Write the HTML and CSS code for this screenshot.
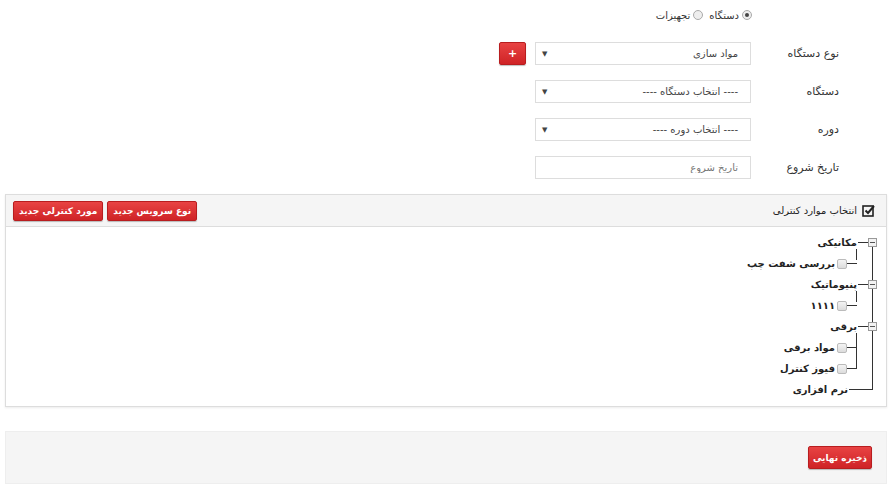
FILE: index.html
```html
<!DOCTYPE html>
<html lang="fa" dir="rtl">
<head>
  <meta charset="UTF-8">
  <meta name="viewport" content="width=device-width, initial-scale=1.0">
  <title>موارد کنترلی</title>
  <link rel="stylesheet" href="styles.css">
</head>
<body>
  <div class="page">
    <form class="filter">
      <div class="radios">
        <label class="radio"><span class="dot checked"></span>دستگاه</label>
        <label class="radio"><span class="dot"></span>تجهیزات</label>
      </div>

      <div class="row">
        <label class="lbl">نوع دستگاه</label>
        <div class="select"><span>مواد سازی</span><span class="arrow">▼</span></div>
        <button type="button" class="btn add">+</button>
      </div>

      <div class="row">
        <label class="lbl">دستگاه</label>
        <div class="select"><span>---- انتخاب دستگاه ----</span><span class="arrow">▼</span></div>
      </div>

      <div class="row">
        <label class="lbl">دوره</label>
        <div class="select"><span>---- انتخاب دوره ----</span><span class="arrow">▼</span></div>
      </div>

      <div class="row">
        <label class="lbl">تاریخ شروع</label>
        <input class="text" type="text" placeholder="تاریخ شروع">
      </div>
    </form>

    <div class="panel">
      <div class="panel-head">
        <div class="title">
          <svg width="13" height="13" viewBox="0 0 13 13">
            <rect x="1" y="2" width="10" height="10" fill="none" stroke="#222" stroke-width="1.6"/>
            <path d="M3.5 6.5 L6 9 L12 2" fill="none" stroke="#222" stroke-width="2"/>
          </svg>
          انتخاب موارد کنترلی
        </div>
        <div class="actions">
          <button type="button" class="btn">نوع سرویس جدید</button>
          <button type="button" class="btn">مورد کنترلی جدید</button>
        </div>
      </div>

      <div class="panel-body">
        <ul class="tree">
          <li class="node">
            <span class="toggle"></span>مکانیکی
            <ul>
              <li><span class="check"></span>بررسی شفت چپ</li>
            </ul>
          </li>
          <li class="node">
            <span class="toggle"></span>پنیوماتیک
            <ul>
              <li><span class="check"></span>۱۱۱۱</li>
            </ul>
          </li>
          <li class="node">
            <span class="toggle"></span>برقی
            <ul>
              <li><span class="check"></span>مواد برقی</li>
              <li><span class="check"></span>فیوز کنترل</li>
            </ul>
          </li>
          <li class="leaf">نرم افزاری</li>
        </ul>
      </div>
    </div>

    <div class="footer">
      <button type="button" class="btn save">ذخیره نهایی</button>
    </div>
  </div>
</body>
</html>
```

FILE: styles.css
```css
body {
  margin: 0;
  font-family: "DejaVu Sans", Tahoma, sans-serif;
  font-size: 11px;
  color: #333;
  background: #fff;
}

.page {
  padding: 0 5px;
}

/* top form */
.filter {
  display: flex;
  flex-direction: column;
  gap: 15px;
  padding-top: 6px;
}

.radios {
  display: flex;
  gap: 6px;
  height: 18px;
  align-items: center;
  padding-right: 135px;
  margin-bottom: 3px;
}

.radio {
  display: flex;
  align-items: center;
  gap: 3px;
  font-size: 10px;
}

.dot {
  width: 8px;
  height: 8px;
  border: 1px solid #aaa;
  border-radius: 50%;
  background: #eee;
  position: relative;
}

.dot.checked::after {
  content: "";
  position: absolute;
  top: 2px;
  right: 2px;
  width: 4px;
  height: 4px;
  border-radius: 50%;
  background: #444;
}

.row {
  display: flex;
  align-items: center;
  height: 23px;
  padding-right: 48px;
}

.lbl {
  width: 88px;
  font-size: 11px;
  color: #333;
}

.select {
  width: 208px;
  height: 21px;
  border: 1px solid #ddd;
  display: flex;
  align-items: center;
  justify-content: space-between;
  padding: 0 0 0 6px;
  box-sizing: content-box;
  color: #444;
  font-size: 10px;
}

.select span:first-child {
  padding-right: 12px;
}

.arrow {
  font-size: 7px;
  color: #444;
}

.text {
  width: 200px;
  height: 21px;
  border: 1px solid #ddd;
  padding: 0 12px 0 2px;
  font-family: inherit;
  font-size: 10px;
  box-sizing: content-box;
}

.text::placeholder {
  color: #777;
}

.btn {
  font-family: inherit;
  background: linear-gradient(#e84343, #cf2326);
  border: 1px solid #b81d1f;
  border-radius: 2px;
  color: #fff;
  font-weight: bold;
  font-size: 9px;
  height: 21px;
  padding: 0 8px;
  box-shadow: 0 1px 1px rgba(0, 0, 0, 0.25);
}

.add {
  width: 27px;
  height: 23px;
  margin-right: 9px;
  padding: 0;
  font-size: 11px;
}

/* panel */
.panel {
  margin-top: 15px;
  border: 1px solid #ddd;
  box-shadow: 0 1px 2px rgba(0, 0, 0, 0.08);
}

.panel-head {
  height: 31px;
  background: #f5f5f5;
  border-bottom: 1px solid #ddd;
  display: flex;
  align-items: center;
  justify-content: space-between;
  padding: 0 11px 0 7px;
}

.title {
  display: flex;
  align-items: center;
  gap: 5px;
  font-size: 10px;
  color: #222;
}

.actions {
  display: flex;
  gap: 4px;
}

.actions .btn {
  height: 20px;
  padding: 0 5px;
}

.panel-body {
  padding: 5px 13px 6px;
}

/* tree */
.tree,
.tree ul {
  list-style: none;
  margin: 0;
  padding: 0;
}

.tree li {
  position: relative;
  line-height: 21px;
  font-weight: bold;
  font-size: 10px;
  color: #222;
}

.tree li::before {
  content: "";
  position: absolute;
  right: 0;
  top: 10px;
  border-top: 1px solid #333;
}

.tree li::after {
  content: "";
  position: absolute;
  right: 0;
  top: 0;
  bottom: 0;
  border-right: 1px solid #333;
}

.tree li:last-child::after {
  bottom: auto;
  height: 11px;
}

.tree > li {
  padding-right: 16px;
}

.tree > li::before {
  width: 15px;
}

.tree > li:first-child::after {
  top: 7px;
}

.tree > li.leaf {
  padding-right: 25px;
}

.tree > li.leaf::before {
  width: 24px;
}

.toggle {
  position: absolute;
  right: -4px;
  top: 6px;
  width: 7px;
  height: 7px;
  border: 1px solid #999;
  background: #f2f2f2;
  z-index: 1;
}

.toggle::after {
  content: "";
  position: absolute;
  top: 3px;
  right: 1px;
  width: 5px;
  border-top: 1px solid #555;
}

.tree ul li {
  padding-right: 10px;
  display: flex;
  align-items: center;
  gap: 2px;
  height: 21px;
}

.tree ul li::before {
  width: 10px;
}

.tree ul li:first-child::after {
  top: -4px;
}

.tree ul li:last-child::after {
  height: 11px;
}

.check {
  width: 8px;
  height: 8px;
  border: 1px solid #bbb;
  border-radius: 2px;
  background: linear-gradient(#f4f4f4, #dcdcdc);
}

/* footer */
.footer {
  margin-top: 24px;
  height: 51px;
  background: #f5f5f5;
  border: 1px solid #eee;
  display: flex;
  align-items: center;
  padding-right: 14px;
  margin-bottom: 6px;
}

.save {
  height: 23px;
  padding: 0 4px;
  font-size: 9px;
}
```
